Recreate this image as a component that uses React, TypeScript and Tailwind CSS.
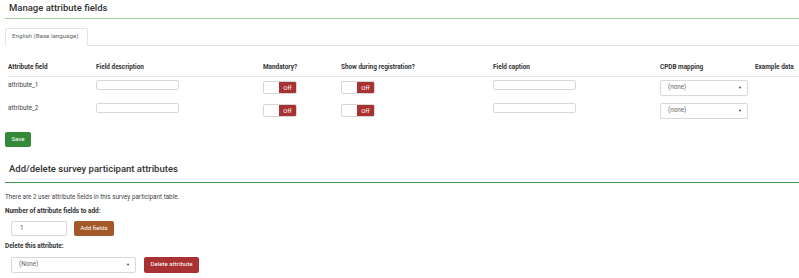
import React from 'react';

const font = { fontFamily: 'Roboto, "Liberation Sans", sans-serif' };

const Toggle: React.FC = () => (
  <div className="flex h-[13px] w-[34px] rounded-[2px] border border-[#d6d6d6] bg-white overflow-hidden">
    <div className="flex-1" />
    <div className="flex w-[17px] items-center justify-center bg-[#a83232] text-[6px] text-white">Off</div>
  </div>
);

const Select: React.FC<{ label: string; w: string }> = ({ label, w }) => (
  <div className={`flex h-[16px] ${w} items-center justify-between rounded-[2px] border border-[#d8d8d8] bg-white pl-[7px] pr-[5px] text-[6.3px] text-[#666]`}>
    <span>{label}</span>
    <span className="text-[4px] text-[#444]">▼</span>
  </div>
);

const TextBox: React.FC = () => (
  <div className="h-[10px] w-[83px] rounded-[2px] border border-[#d8d8d8] bg-white" />
);

const rows = ['attribute_1', 'attribute_2'];

export default function App() {
  return (
    <div className="relative h-[278px] w-[799px] overflow-hidden bg-white text-[#333]" style={font}>
      {/* Manage attribute fields */}
      <div className="ml-[5px] h-[19px] border-b-[1.5px] border-[#9dcb99] pl-[4px] pt-[2px] text-[9.5px] font-medium leading-[12px] text-[#333]">
        Manage attribute fields
      </div>

      <div className="ml-[5px] mt-[9px] flex border-b border-[#e3e3e3]">
        <div className="-mb-px flex h-[18px] w-[83px] items-center rounded-t-[2px] border border-b-white border-[#e3e3e3] bg-white pl-[6px] text-[6.2px] text-[#666]">
          English (Base language)
        </div>
      </div>

      {/* table */}
      <div className="mt-[14px] pl-[8px]">
        <div className="flex h-[17px] items-start border-b-[1.5px] border-[#e6e6e6] pt-[3px] text-[6.4px] font-bold text-[#333]">
          <div className="w-[88px]">Attribute field</div>
          <div className="w-[167px]">Field description</div>
          <div className="w-[78px]">Mandatory?</div>
          <div className="w-[152px]">Show during registration?</div>
          <div className="w-[167px]">Field caption</div>
          <div className="w-[95px]">CPDB mapping</div>
          <div>Example data</div>
        </div>
        {rows.map((r) => (
          <div key={r} className="flex h-[23px] items-start pt-[3px] text-[6.4px] text-[#444]">
            <div className="w-[88px] pt-[1px]">{r}</div>
            <div className="w-[167px]"><TextBox /></div>
            <div className="w-[78px] pt-[1px]"><Toggle /></div>
            <div className="w-[152px] pt-[1px]"><Toggle /></div>
            <div className="w-[167px]"><TextBox /></div>
            <div className="w-[95px]"><Select label="(none)" w="w-[88px]" /></div>
            <div />
          </div>
        ))}
      </div>

      <div className="ml-[5px] mt-[9px]">
        <button className="flex h-[15px] w-[26px] items-center justify-center rounded-[2px] bg-[#348a37] text-[6.2px] text-white">
          Save
        </button>
      </div>

      {/* Add/delete */}
      <div className="ml-[5px] mt-[16px] h-[20px] border-b-[1.5px] border-[#3f9b47] pl-[4px] text-[9.5px] font-medium leading-[12px] text-[#333]">
        Add/delete survey participant attributes
      </div>

      <div className="ml-[5px] mt-[10px] text-[6.3px] leading-[8px] text-[#444]">
        There are 2 user attribute fields in this survey participant table.
      </div>
      <div className="ml-[5px] mt-[6px] text-[6.4px] font-bold leading-[8px] text-[#333]">
        Number of attribute fields to add:
      </div>
      <div className="ml-[11px] mt-[6px] flex gap-[7px]">
        <div className="flex h-[15px] w-[56px] items-center rounded-[2px] border border-[#d8d8d8] pl-[8px] text-[6.3px] text-[#555]">1</div>
        <button className="flex h-[15px] w-[40px] items-center justify-center rounded-[2px] bg-[#a3582a] text-[6.2px] text-white">
          Add fields
        </button>
      </div>
      <div className="ml-[5px] mt-[6px] text-[6.4px] font-bold leading-[8px] text-[#333]">
        Delete this attribute:
      </div>
      <div className="ml-[11px] mt-[7px] flex gap-[8px]">
        <Select label="(None)" w="w-[125px]" />
        <button className="flex h-[16px] w-[55px] items-center justify-center rounded-[2px] bg-[#a83232] text-[6.2px] text-white">
          Delete attribute
        </button>
      </div>
    </div>
  );
}
